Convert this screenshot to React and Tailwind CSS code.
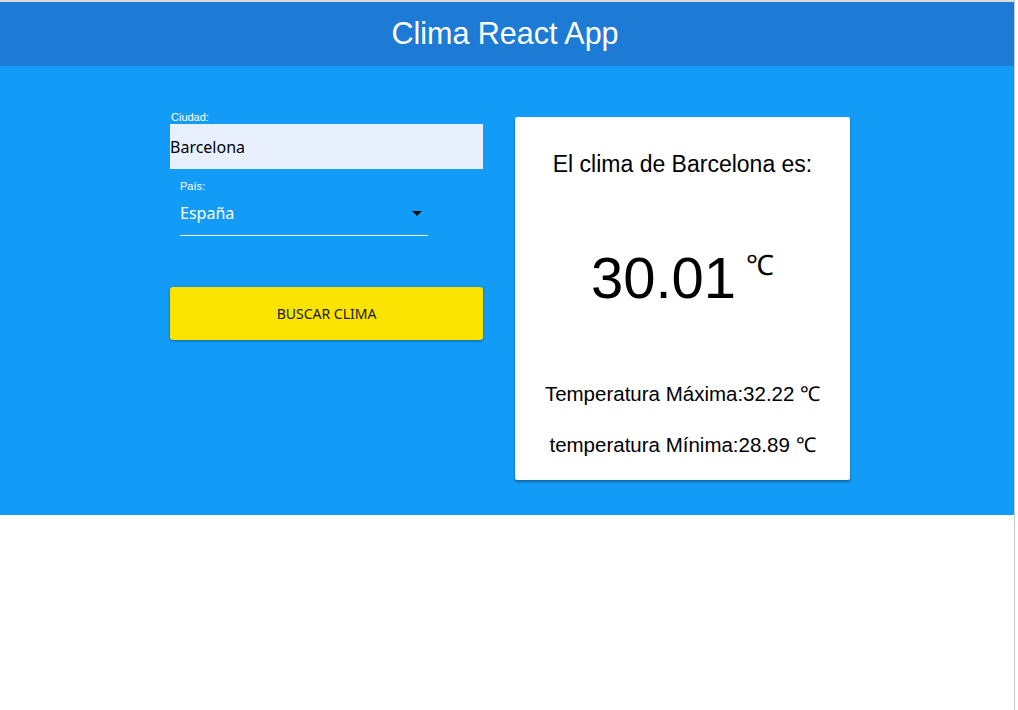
import React from 'react';

export default function App() {
  return (
    <div className="flex min-h-[710px] w-[1018px] bg-white" style={{ fontFamily: '"Liberation Sans", Arial, sans-serif' }}>
      <div className="w-[1014px] border-t-2 border-[#dcdcdc]">
        {/* Header */}
        <header className="flex h-[64px] items-center justify-center bg-[#1e7bd5]">
          <h1 className="mr-[4px] text-[30.5px] text-white">Clima React App</h1>
        </header>

        {/* Main */}
        <main className="flex h-[449px] items-start justify-center gap-[32px] bg-[#139cf7] pl-[6px] pt-[45px]">
          {/* Form */}
          <form className="w-[313px]" onSubmit={(e) => e.preventDefault()}>
            <label className="block text-[11px] leading-[13px] text-white pl-[1px]">Ciudad:</label>
            <input
              defaultValue="Barcelona"
              className="block h-[45px] w-full bg-[#e8f0fe] text-[16px] text-black outline-none"
              style={{ fontFamily: '"Noto Sans", "Open Sans", sans-serif' }}
            />
            <div className="ml-[10px] mt-[11px] w-[248px]">
              <label className="block text-[11px] leading-[13px] text-white">País:</label>
              <div
                className="flex h-[43px] items-center justify-between border-b border-white pr-[6px] pb-[2px] text-[16px] text-white"
                style={{ fontFamily: '"Noto Sans", "Open Sans", sans-serif' }}
              >
                <span>España</span>
                <span className="block h-0 w-0 border-x-[5px] border-t-[5px] border-x-transparent border-t-[#111]" />
              </div>
            </div>
            <button
              type="submit"
              className="mt-[51px] flex h-[53px] w-full items-center justify-center rounded-[3px] bg-[#fbe300] text-[14px] text-[#1a1a1a] shadow-[0_1px_3px_rgba(0,0,0,0.35)]"
              style={{ fontFamily: '"Noto Sans", "Open Sans", sans-serif' }}
            >
              BUSCAR CLIMA
            </button>
          </form>

          {/* Card */}
          <div className="mt-[6px] flex h-[363px] w-[335px] flex-col items-center rounded-[2px] bg-white text-black shadow-[0_2px_3px_rgba(0,0,0,0.35)]">
            <p className="mt-[30px] text-[23px]">El clima de Barcelona es:</p>
            <p className="mt-[67px] flex items-start text-[58px] leading-[58px]">
              30.01<span className="ml-[10px] mt-[3px] text-[28px] leading-[28px]">℃</span>
            </p>
            <p className="mt-[72px] text-[20.5px]">Temperatura Máxima:32.22 ℃</p>
            <p className="mt-[21px] text-[20.5px]">temperatura Mínima:28.89 ℃</p>
          </div>
        </main>
      </div>
      <div className="w-[4px] border-l border-[#c8c8c8] bg-white" />
    </div>
  );
}
